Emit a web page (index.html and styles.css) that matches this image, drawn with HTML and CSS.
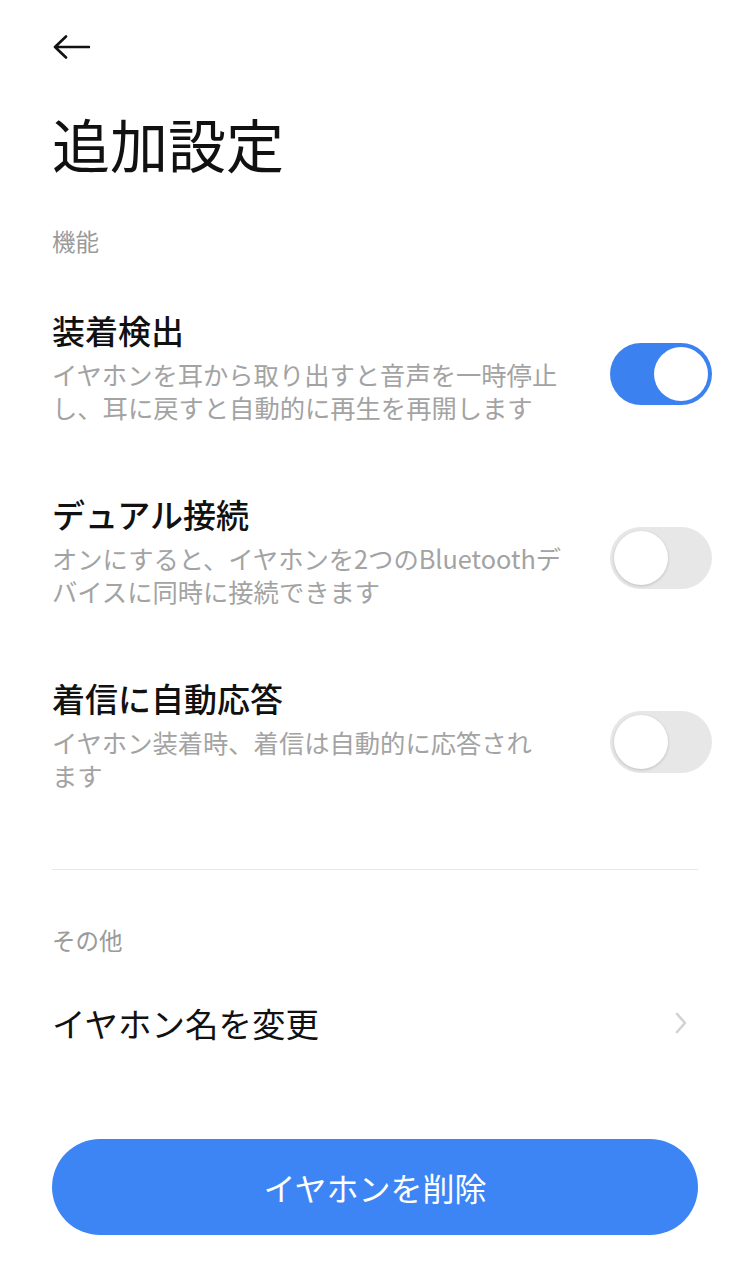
FILE: index.html
```html
<!DOCTYPE html>
<html lang="ja">
<head>
<meta charset="utf-8">
<link rel="stylesheet" href="styles.css">
</head>
<body>
<div class="page">
  <div class="topbar">
    <svg class="back" width="38" height="24" viewBox="0 0 38 24"><path d="M37 12H3M14 1.5L3 12l11 10.5" fill="none" stroke="#111" stroke-width="2.6" stroke-linecap="round" stroke-linejoin="round"/></svg>
  </div>
  <h1 class="title">追加設定</h1>

  <div class="section-label first">機能</div>

  <div class="row">
    <div class="row-text">
      <div class="row-title">装着検出</div>
      <div class="row-desc">イヤホンを耳から取り出すと音声を一時停止<br>し、耳に戻すと自動的に再生を再開します</div>
    </div>
    <div class="toggle on"><span class="knob"></span></div>
  </div>

  <div class="row">
    <div class="row-text">
      <div class="row-title">デュアル接続</div>
      <div class="row-desc">オンにすると、イヤホンを2つのBluetoothデ<br>バイスに同時に接続できます</div>
    </div>
    <div class="toggle"><span class="knob"></span></div>
  </div>

  <div class="row">
    <div class="row-text">
      <div class="row-title">着信に自動応答</div>
      <div class="row-desc">イヤホン装着時、着信は自動的に応答され<br>ます</div>
    </div>
    <div class="toggle"><span class="knob"></span></div>
  </div>

  <div class="divider"></div>

  <div class="section-label">その他</div>

  <div class="link-row">
    <div class="row-title link-title">イヤホン名を変更</div>
    <svg class="chevron" width="14" height="24" viewBox="0 0 14 24"><path d="M3 3l8 9-8 9" fill="none" stroke="#d2d2d2" stroke-width="2.6" stroke-linecap="round" stroke-linejoin="round"/></svg>
  </div>

  <button class="delete-btn">イヤホンを削除</button>
</div>
</body>
</html>
```

FILE: styles.css
```css
* { box-sizing: border-box; }
html, body {
  margin: 0;
  padding: 0;
  background: #fff;
}
body {
  font-family: "Noto Sans CJK JP", "Noto Sans", sans-serif;
  color: #111;
}
.page {
  padding: 0 52px;
  display: flex;
  flex-direction: column;
}
.topbar {
  height: 94px;
  display: flex;
  align-items: center;
}
.back { display: block; }
.title {
  margin: 16px 0 0;
  font-size: 58px;
  line-height: 66px;
  font-weight: 400;
}
.section-label {
  font-size: 23.5px;
  line-height: 32px;
  color: #9a9a9a;
  margin-top: 54px;
}
.section-label.first { margin-top: 49px; }
.row {
  display: flex;
  justify-content: space-between;
  align-items: flex-start;
  margin-top: 51px;
}
.row + .row { margin-top: 68px; }
.row-title {
  font-size: 33px;
  line-height: 44px;
  font-weight: 500;
  color: #111;
}
.link-title {
  font-weight: 400;
  font-size: 33.5px;
}
.row-desc {
  margin-top: 6px;
  font-size: 25.3px;
  line-height: 33px;
  color: #a3a3a3;
  white-space: nowrap;
}
.toggle {
  margin-top: 35px;
  margin-right: -14px;
  width: 102px;
  height: 62px;
  border-radius: 31px;
  background: #e7e7e7;
  padding: 4px;
  display: flex;
  justify-content: flex-start;
  flex-shrink: 0;
}
.toggle .knob {
  width: 54px;
  height: 54px;
  border-radius: 50%;
  background: #fff;
  box-shadow: 0 1px 3px rgba(0,0,0,0.18);
}
.toggle.on {
  background: #3b82f0;
  justify-content: flex-end;
}
.toggle.on .knob { box-shadow: none; }
.divider {
  margin-top: 77px;
  height: 1px;
  background: #e8e8e8;
}
.link-row {
  margin-top: 45px;
  display: flex;
  justify-content: space-between;
  align-items: center;
}
.chevron {
  display: block;
  margin-right: 10px;
}
.delete-btn {
  margin-top: 94px;
  height: 96px;
  width: 100%;
  border: none;
  border-radius: 48px;
  background: #3d85f4;
  color: #fff;
  font-family: "Noto Sans CJK JP", "Noto Sans", sans-serif;
  font-size: 32px;
  font-weight: 400;
  padding: 0;
}
```
